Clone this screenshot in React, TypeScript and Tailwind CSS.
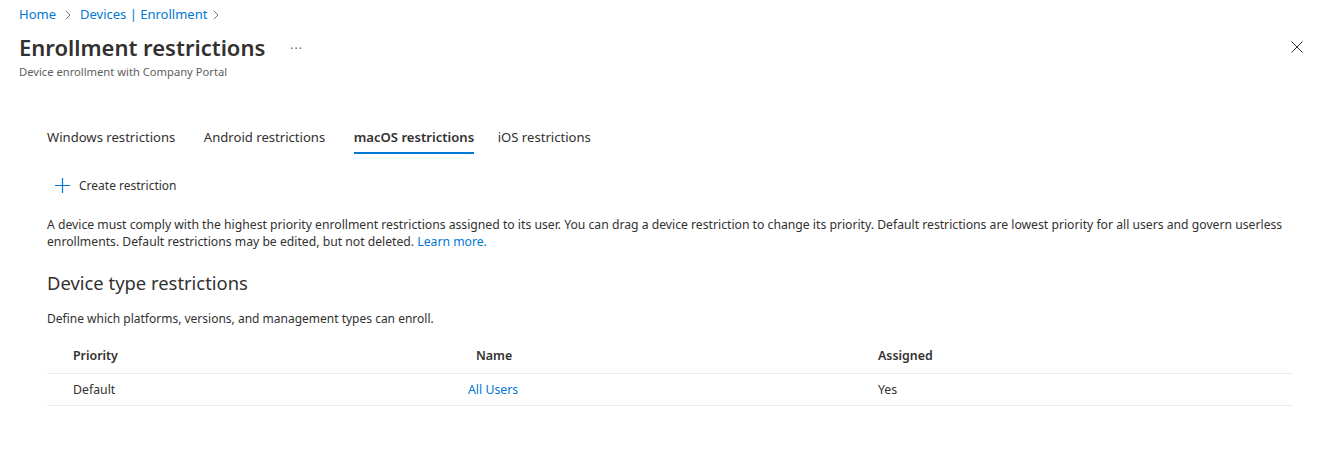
import { ChevronRight } from 'lucide-react';

const tabs = [
  'Windows restrictions',
  'Android restrictions',
  'macOS restrictions',
  'iOS restrictions',
];

export default function App() {
  return (
    <div className="min-h-[474px] w-full bg-white text-[#323130] font-['Segoe_UI','Noto_Sans',sans-serif]">
      <div className="pl-[19px] pr-[22px] pt-[5px]">
        <div className="flex items-center text-[13px] leading-[19px] text-[#0078d4]">
          <span>Home</span>
          <ChevronRight className="ml-[4px] mr-[4px] h-4 w-4 text-[#605e5c]" strokeWidth={1.25} />
          <span>Devices | Enrollment</span>
          <ChevronRight className="ml-[1px] h-4 w-4 text-[#605e5c]" strokeWidth={1.25} />
        </div>
        <div className="mt-[8px] flex items-center justify-between">
          <div className="flex items-center">
            <h1 className="text-[22px] leading-[30px] font-semibold">Enrollment restrictions</h1>
            <span className="ml-[25px] mt-[3px] text-[12px] tracking-[1px] text-[#605e5c]">···</span>
          </div>
          <svg width="12" height="12" viewBox="0 0 12 12" className="text-[#323130]">
            <path d="M0.5 0.5 11.5 11.5M11.5 0.5 0.5 11.5" stroke="currentColor" strokeWidth="1" fill="none" />
          </svg>
        </div>
        <div className="mt-[2px] text-[11.2px] leading-[16px] text-[#605e5c]">
          Device enrollment with Company Portal
        </div>
      </div>

      <div className="pl-[47px] pr-[32px] pt-[48px]">
        <div className="flex gap-[28.5px] text-[13.1px] leading-[18px]">
          {tabs.map((t, i) => (
            <div key={t} className={'flex flex-col ' + (i === 3 ? '-ml-[5px]' : '')}>
              <span className={i === 2 ? 'font-semibold' : ''}>{t}</span>
              <span className={'mt-[6px] h-[2px] ' + (i === 2 ? 'bg-[#0078d4]' : 'bg-transparent')} />
            </div>
          ))}
        </div>

        <div className="mt-[23px] ml-[8px] flex h-[17px] items-center gap-[9px] text-[12px]">
          <svg width="15" height="15" viewBox="0 0 15 15" className="text-[#0078d4]">
            <path d="M7.5 0v15M0 7.5h15" stroke="currentColor" strokeWidth="1.2" fill="none" />
          </svg>
          <span>Create restriction</span>
        </div>

        <p className="mt-[22px] text-[12.2px] leading-[17px]">
          A device must comply with the highest priority enrollment restrictions assigned to its
          user. You can drag a device restriction to change its priority. Default restrictions are
          lowest priority for all users and govern userless enrollments. Default restrictions may be
          edited, but not deleted. <span className="text-[#0078d4]">Learn more.</span>
        </p>

        <h2 className="mt-[20px] text-[18.4px] leading-[26px]">Device type restrictions</h2>
        <div className="mt-[15px] text-[12px] leading-[16px]">
          Define which platforms, versions, and management types can enroll.
        </div>

        <div className="mt-[20px] w-[1246px]">
          <div className="grid grid-cols-[429px_402px_1fr] border-b border-[#edebe9] pb-[8px] text-[12.4px] leading-[18px] font-semibold">
            <span className="pl-[26px]">Priority</span>
            <span>Name</span>
            <span>Assigned</span>
          </div>
          <div className="grid grid-cols-[421px_410px_1fr] border-b border-[#edebe9] py-[6px] text-[12.3px] leading-[19px]">
            <span className="pl-[26px]">Default</span>
            <span className="text-[#0078d4]">All Users</span>
            <span>Yes</span>
          </div>
        </div>
      </div>
    </div>
  );
}
